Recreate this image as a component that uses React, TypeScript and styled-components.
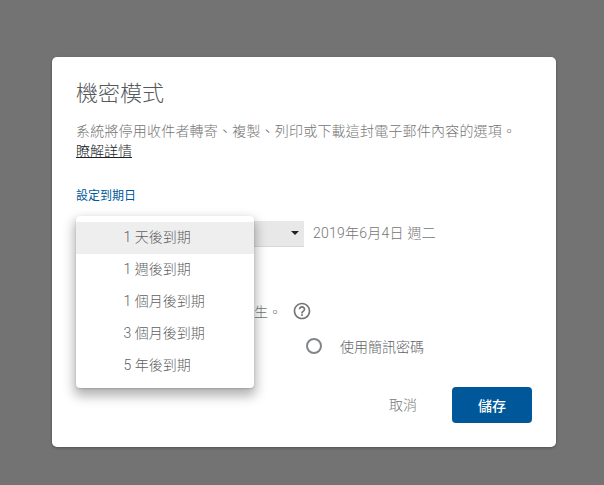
import React from "react";
import styled, { createGlobalStyle } from "styled-components";

const Global = createGlobalStyle`
  html, body { margin: 0; height: 100%; background: #737373; overflow: hidden; }
  #root { height: 100%; }
  * { box-sizing: border-box; }
`;
const Page = styled.div`
  width: 604px; height: 485px; padding: 57px 48px 38px 52px;
  font-family: Roboto, "Noto Sans CJK TC", sans-serif;
`;
const Dialog = styled.div`
  position: relative; width: 504px; height: 390px; background: #fff; border-radius: 5px;
  padding: 24px 24px 24px; display: flex; flex-direction: column;
  box-shadow: 0 1px 3px rgba(0,0,0,.3);
`;
const Title = styled.h1`
  margin: 0; font-size: 22px; line-height: 26px; font-weight: 300; color: #55595c;
`;
const Desc = styled.p`
  margin: 14px 0 0; font-size: 14px; line-height: 20px; font-weight: 300; color: #757575;
  letter-spacing: .2px;
`;
const Learn = styled.a`
  display: block; width: fit-content; color: #202124; text-decoration: underline; font-weight: 300;
  letter-spacing: 0;
`;
const Section = styled.div`
  margin-top: 26px; font-size: 12px; line-height: 18px; color: #00589b;
`;
const ExpiryRow = styled.div`
  margin-top: 16px; display: flex; align-items: center; height: 26px; gap: 9px;
`;
const SelectBox = styled.div`
  width: 228px; height: 26px; background: #e8e8e8; border-bottom: 1px solid #d8d8d8;
  display: flex; justify-content: flex-end; align-items: center; padding: 0 5px 1px 0;
`;
const Caret = styled.span`
  width: 0; height: 0; border-left: 4px solid transparent; border-right: 4px solid transparent;
  border-top: 4px solid #202124;
`;
const DateText = styled.span`
  font-size: 14px; line-height: 24px; padding-bottom: 2px; font-weight: 300; color: #757575;
  letter-spacing: .25px;
`;
const HintRow = styled.div`
  margin-top: 53px; height: 22px; display: flex; align-items: center; padding-left: 118px;
  font-size: 14px; font-weight: 300; color: #757575;
`;
const HintText = styled.span`
  width: 88px; display: flex; justify-content: flex-end; white-space: nowrap;
`;
const HelpIcon = styled.svg`
  width: 20px; height: 20px; margin-left: 10px; flex: none;
`;
const RadioRow = styled.div`
  margin-top: 12px; height: 24px; display: flex; align-items: center; padding-left: 230px; gap: 18px;
  font-size: 14px; font-weight: 300; color: #5f6368;
`;
const Radio = styled.span`
  width: 16px; height: 16px; border: 2px solid #80868b; border-radius: 50%; flex: none;
`;
const Actions = styled.div`
  margin-top: auto; display: flex; justify-content: flex-end; align-items: center; gap: 34px;
`;
const Cancel = styled.button`
  border: 0; background: none; padding: 0 0 2px; font: inherit; font-size: 14px; font-weight: 300; color: #757575;
  width: 30px;
`;
const Save = styled.button`
  width: 80px; height: 36px; border: 0; border-radius: 4px; background: #00589b; color: #fff;
  font: inherit; font-size: 14px; font-weight: 500;
`;
const Menu = styled.div`
  position: absolute; left: 24px; top: 159px; width: 178px; height: 172px; background: #fff;
  border-radius: 4px; padding: 6px 0;
  box-shadow: 0 6px 12px 2px rgba(0,0,0,.3), 0 1px 2px rgba(0,0,0,.15);
`;
const Item = styled.div<{ $active?: boolean }>`
  height: 32px; line-height: 31px; padding-left: 47.5px; font-size: 14px; font-weight: 300;
  color: #616161; background: ${(p) => (p.$active ? "#eeeeee" : "transparent")};
`;

const items = ["1 天後到期", "1 週後到期", "1 個月後到期", "3 個月後到期", "5 年後到期"];

export default function App() {
  return (
    <Page>
      <Global />
      <Dialog>
        <Title>機密模式</Title>
        <Desc>
          系統將停用收件者轉寄、複製、列印或下載這封電子郵件內容的選項。
          <Learn>瞭解詳情</Learn>
        </Desc>
        <Section>設定到期日</Section>
        <ExpiryRow>
          <SelectBox><Caret /></SelectBox>
          <DateText>2019年6月4日 週二</DateText>
        </ExpiryRow>
        <HintRow>
          <HintText>產生。</HintText>
          <HelpIcon viewBox="0 0 24 24" fill="#757575">
            <path d="M11 18h2v-2h-2v2zm1-16C6.48 2 2 6.48 2 12s4.48 10 10 10 10-4.48 10-10S17.52 2 12 2zm0 18c-4.41 0-8-3.59-8-8s3.59-8 8-8 8 3.59 8 8-3.59 8-8 8zm0-14c-2.21 0-4 1.79-4 4h2c0-1.1.9-2 2-2s2 .9 2 2c0 2-3 1.75-3 5h2c0-2.25 3-2.5 3-5 0-2.21-1.79-4-4-4z" />
          </HelpIcon>
        </HintRow>
        <RadioRow>
          <Radio />
          <span>使用簡訊密碼</span>
        </RadioRow>
        <Actions>
          <Cancel>取消</Cancel>
          <Save>儲存</Save>
        </Actions>
        <Menu>
          {items.map((t, i) => (
            <Item key={t} $active={i === 0}>{t}</Item>
          ))}
        </Menu>
      </Dialog>
    </Page>
  );
}
